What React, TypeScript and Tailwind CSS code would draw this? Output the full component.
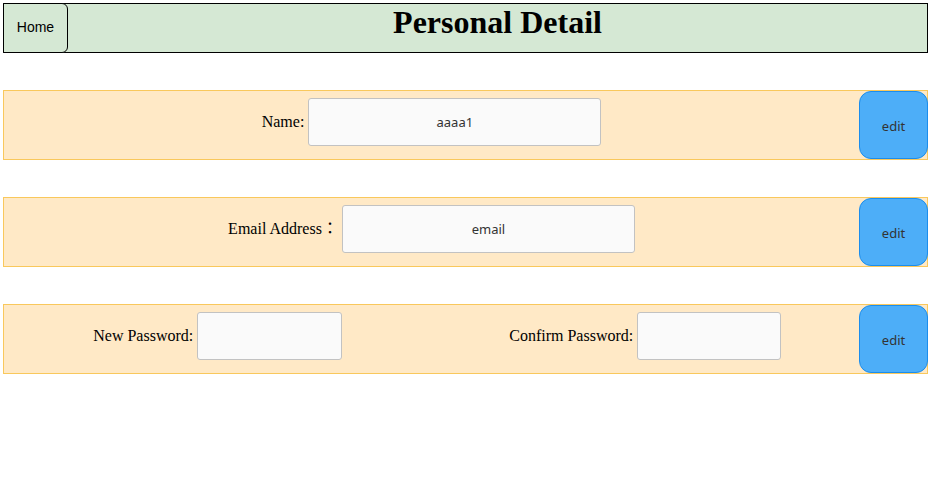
const serif = "font-['Liberation_Serif','Noto_Sans_CJK_TC',serif]";

function Field({ label, value, width }: { label: string; value?: string; width: string }) {
  return (
    <div className="flex items-center gap-[4px]">
      <span className={`${serif} text-[16px] text-black`}>{label}</span>
      <input
        readOnly
        value={value ?? ""}
        className={`${width} h-[48px] rounded-[3px] border border-[#c2c2c2] bg-[#fafafa] text-center font-['Noto_Sans',sans-serif] text-[13px] text-[#333] outline-none`}
      />
    </div>
  );
}

function Row({ children }: { children: React.ReactNode }) {
  return (
    <div className="flex h-[70px] border border-[#f9c85c] bg-[#ffe9c6]">
      <div className="flex flex-1 items-center pb-[7px]">{children}</div>
      <button className="-mr-px h-[68px] w-[69px] rounded-[12px] border border-[#1b8ded] bg-[#4daef8] pt-[3px] font-['Noto_Sans',sans-serif] text-[13px] text-[#333]">
        edit
      </button>
    </div>
  );
}

export default function App() {
  return (
    <div className="min-h-screen bg-white pl-[3px] pr-[4px] pt-[3px]">
      <header className="flex h-[50px] border border-black bg-[#d5e8d4]">
        <button className="-my-px -ml-px h-[50px] w-[65px] rounded-r-[6px] border border-black bg-[#d5e8d4] pb-[1px] font-['Liberation_Sans',Arial,sans-serif] text-[14px] text-black">
          Home
        </button>
        <h1 className={`${serif} flex-1 text-center text-[32px] font-bold leading-[37px] text-black`}>
          Personal Detail
        </h1>
      </header>

      <div className="mt-[37px] flex flex-col gap-[37px]">
        <Row>
          <div className="flex flex-1 justify-center">
            <Field label="Name:" value="aaaa1" width="w-[293px]" />
          </div>
        </Row>
        <Row>
          <div className="flex flex-1 justify-center">
            <Field label="Email Address：" value="email" width="w-[293px]" />
          </div>
        </Row>
        <Row>
          <div className="flex flex-1 justify-center">
            <Field label="New Password:" width="w-[145px]" />
          </div>
          <div className="flex flex-1 justify-center">
            <Field label="Confirm Password:" width="w-[144px]" />
          </div>
        </Row>
      </div>
    </div>
  );
}
